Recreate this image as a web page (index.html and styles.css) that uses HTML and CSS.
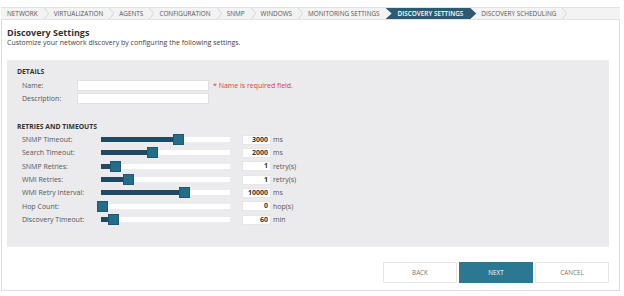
FILE: index.html
```html
<!DOCTYPE html>
<html lang="en">
<head>
    <meta charset="UTF-8">
    <title>Discovery Settings</title>
    <link rel="stylesheet" href="styles.css">
</head>
<body>
    <div class="wizard">
        <nav class="crumbs">
            <span class="crumb">Network</span><svg class="sep" viewBox="0 0 5 12"><polyline points="0,0 5,6 0,12"/></svg>
            <span class="crumb">Virtualization</span><svg class="sep" viewBox="0 0 5 12"><polyline points="0,0 5,6 0,12"/></svg>
            <span class="crumb">Agents</span><svg class="sep" viewBox="0 0 5 12"><polyline points="0,0 5,6 0,12"/></svg>
            <span class="crumb">Configuration</span><svg class="sep" viewBox="0 0 5 12"><polyline points="0,0 5,6 0,12"/></svg>
            <span class="crumb">SNMP</span><svg class="sep" viewBox="0 0 5 12"><polyline points="0,0 5,6 0,12"/></svg>
            <span class="crumb">Windows</span><svg class="sep" viewBox="0 0 5 12"><polyline points="0,0 5,6 0,12"/></svg>
            <span class="crumb">Monitoring Settings</span>
            <span class="crumb active">Discovery Settings</span>
            <span class="crumb">Discovery Scheduling</span><svg class="sep" viewBox="0 0 5 12"><polyline points="0,0 5,6 0,12"/></svg>
        </nav>

        <div class="content">
            <h1>Discovery Settings</h1>
            <p class="intro">Customize your network discovery by configuring the following settings.</p>

            <div class="panel">
                <h2>Details</h2>
                <div class="field">
                    <label>Name:</label>
                    <input type="text" class="text-input">
                    <span class="error">* Name is required field.</span>
                </div>
                <div class="field">
                    <label>Description:</label>
                    <input type="text" class="text-input">
                </div>

                <h2 class="second">Retries and Timeouts</h2>
                <div class="slider-row">
                    <label>SNMP Timeout:</label>
                    <div class="track"><div class="fill" style="width: 77px"></div><div class="thumb" style="left: 72px"></div></div>
                    <span class="value">3000</span><span class="unit">ms</span>
                </div>
                <div class="slider-row">
                    <label>Search Timeout:</label>
                    <div class="track"><div class="fill" style="width: 51px"></div><div class="thumb" style="left: 46px"></div></div>
                    <span class="value">2000</span><span class="unit">ms</span>
                </div>
                <div class="slider-row">
                    <label>SNMP Retries:</label>
                    <div class="track"><div class="fill" style="width: 14px"></div><div class="thumb" style="left: 9px"></div></div>
                    <span class="value">1</span><span class="unit">retry(s)</span>
                </div>
                <div class="slider-row">
                    <label>WMI Retries:</label>
                    <div class="track"><div class="fill" style="width: 27px"></div><div class="thumb" style="left: 22px"></div></div>
                    <span class="value">1</span><span class="unit">retry(s)</span>
                </div>
                <div class="slider-row">
                    <label>WMI Retry Interval:</label>
                    <div class="track"><div class="fill" style="width: 84px"></div><div class="thumb" style="left: 78px"></div></div>
                    <span class="value">10000</span><span class="unit">ms</span>
                </div>
                <div class="slider-row">
                    <label>Hop Count:</label>
                    <div class="track"><div class="fill" style="width: 1px"></div><div class="thumb" style="left: -4px"></div></div>
                    <span class="value">0</span><span class="unit">hop(s)</span>
                </div>
                <div class="slider-row">
                    <label>Discovery Timeout:</label>
                    <div class="track"><div class="fill" style="width: 12px"></div><div class="thumb" style="left: 7px"></div></div>
                    <span class="value">60</span><span class="unit">min</span>
                </div>
            </div>

            <div class="buttons">
                <button class="btn">Back</button>
                <button class="btn primary">Next</button>
                <button class="btn">Cancel</button>
            </div>
        </div>
    </div>
</body>
</html>
```

FILE: styles.css
```css
body {
    margin: 0;
    font-family: "Open Sans", "Liberation Sans", sans-serif;
    color: #333;
    background-color: #fff;
}
.wizard {
    margin-top: 7px;
    margin-left: 1px;
    width: 619px;
    box-sizing: border-box;
    border: 1px solid #dcdcdc;
    border-top: none;
}
.crumbs {
    display: flex;
    align-items: center;
    height: 11px;
    margin-left: -1px;
    margin-right: -1px;
    padding-left: 6px;
    background-color: #f3f3f3;
    border-top: 1px solid #e2e2e2;
    border-bottom: 1px solid #e2e2e2;
}
.crumb {
    padding: 0 6px 0 5px;
    font-size: 6.4px;
    line-height: 11px;
    text-transform: uppercase;
    color: #555;
    white-space: nowrap;
}
.crumbs .crumb:first-child {
    padding-left: 0;
}
.crumb.active {
    padding: 0 13px 0 12px;
    background-color: #2d5a73;
    color: #fff;
    font-weight: 600;
    clip-path: polygon(0 0, calc(100% - 6px) 0, 100% 50%, calc(100% - 6px) 100%, 0 100%, 6px 50%);
}
.sep {
    width: 5px;
    height: 11px;
    fill: none;
    stroke: #c9c9c9;
    stroke-width: 0.8;
}
.content {
    padding: 0 10px 7px 5px;
}
h1 {
    margin: 7px 0 0;
    font-size: 9px;
    line-height: 11px;
    font-weight: 700;
    color: #333;
}
.intro {
    margin: 0;
    font-size: 7px;
    line-height: 10px;
    color: #444;
}
.panel {
    margin-top: 12px;
    height: 187px;
    box-sizing: border-box;
    padding: 7px 10px 0;
    background-color: #ebebed;
}
h2 {
    margin: 0 0 3px;
    font-size: 6.8px;
    line-height: 10px;
    font-weight: 700;
    text-transform: uppercase;
    color: #333;
}
h2.second {
    margin-top: 18px;
    margin-bottom: 1px;
}
.field {
    display: flex;
    align-items: center;
    height: 11px;
    margin-bottom: 2px;
    padding-left: 5px;
}
.field label, .slider-row label {
    font-size: 7px;
    color: #555;
}
.field label {
    width: 55px;
}
.text-input {
    width: 132px;
    height: 11px;
    box-sizing: border-box;
    margin: 0;
    padding: 0;
    border: 1px solid #e0e0e0;
    background-color: #fff;
}
.error {
    margin-left: 4px;
    font-size: 7px;
    color: #d93a44;
}
.slider-row {
    display: flex;
    align-items: center;
    height: 13.33px;
    padding-left: 5px;
}
.slider-row label {
    width: 79px;
}
.track {
    position: relative;
    width: 129px;
    height: 5px;
    background-color: #fff;
}
.fill {
    height: 100%;
    background-color: #1e4b64;
}
.thumb {
    position: absolute;
    top: -3px;
    width: 11px;
    height: 11px;
    box-sizing: border-box;
    background-color: #236d88;
    border: 1px solid #1b5a72;
}
.value {
    width: 29px;
    height: 10px;
    box-sizing: border-box;
    margin-left: 12px;
    padding-right: 2px;
    background-color: #fff;
    border: 1px solid #e6e6e6;
    font-size: 7px;
    line-height: 8px;
    font-weight: 700;
    text-align: right;
    color: #333;
}
.unit {
    margin-left: 2px;
    font-size: 7px;
    color: #555;
}
.buttons {
    display: flex;
    justify-content: flex-end;
    gap: 2px;
    margin-top: 15px;
}
.btn {
    width: 74px;
    height: 21px;
    margin: 0;
    padding: 0;
    font-family: inherit;
    font-size: 6.3px;
    text-transform: uppercase;
    color: #777;
    background-color: #fff;
    border: 1px solid #e6e6e6;
}
.btn.primary {
    color: #fff;
    background-color: #2a7892;
    border-color: #2a7892;
}
```
